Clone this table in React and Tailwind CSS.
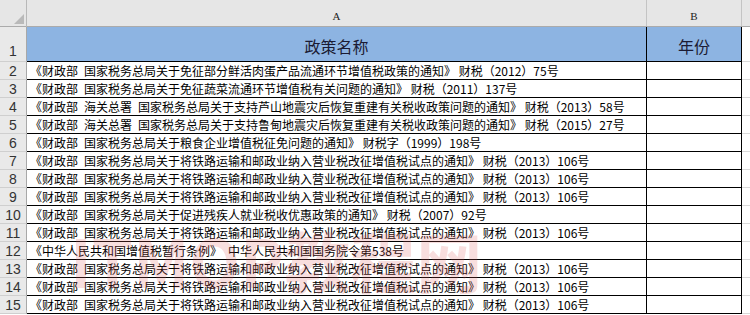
import React from "react";

const S = "\u2002";

const T106 = `《财政部${S}国家税务总局关于将铁路运输和邮政业纳入营业税改征增值税试点的通知》 财税（2013）106号`;

const policies = [
  `《财政部${S}国家税务总局关于免征部分鲜活肉蛋产品流通环节增值税政策的通知》 财税（2012）75号`,
  `《财政部${S}国家税务总局关于免征蔬菜流通环节增值税有关问题的通知》 财税（2011）137号`,
  `《财政部${S}海关总署${S}国家税务总局关于支持芦山地震灾后恢复重建有关税收政策问题的通知》 财税（2013）58号`,
  `《财政部${S}海关总署${S}国家税务总局关于支持鲁甸地震灾后恢复重建有关税收政策问题的通知》 财税（2015）27号`,
  `《财政部${S}国家税务总局关于粮食企业增值税征免问题的通知》 财税字（1999）198号`,
  T106,
  T106,
  T106,
  `《财政部${S}国家税务总局关于促进残疾人就业税收优惠政策的通知》 财税（2007）92号`,
  T106,
  `《中华人民共和国增值税暂行条例》${S}中华人民共和国国务院令第538号`,
  T106,
  T106,
  T106,
];

const Corner = () => (
  <svg width="27" height="27" viewBox="0 0 27 27">
    <polygon points="24,14 24,24 14,24" fill="#b9b9b9" />
  </svg>
);

const RowNum = ({ n, tall }) => (
  <div
    className={`w-[27px] shrink-0 flex justify-center bg-[#e9e9e9] border-r border-b border-r-[#a8a8a8] border-b-[#cfcfcf] font-['Liberation_Sans',sans-serif] text-[14px] text-[#333] leading-none ${
      tall ? "items-end pb-[3px]" : "items-center"
    }`}
  >
    {n}
  </div>
);

export default function App() {
  return (
    <div className="relative w-[750px] h-[315px] overflow-hidden bg-white font-['Noto_Sans_CJK_SC',sans-serif]">
      {/* column letters */}
      <div className="flex h-[27px] bg-[#e6e6e6] border-b border-[#ababab] font-['Liberation_Serif',serif] text-[11px] text-[#222]">
        <div className="w-[27px] shrink-0 border-r border-[#b8b8b8] -mb-px">
          <Corner />
        </div>
        <div className="w-[620px] shrink-0 flex items-end justify-center pb-[2px] border-r border-[#c4c4c4]">
          A
        </div>
        <div className="w-[95px] shrink-0 flex items-end justify-center pb-[2px] border-r border-[#c4c4c4]">
          B
        </div>
        <div className="flex-1" />
      </div>

      {/* title row */}
      <div className="flex h-[35px]">
        <RowNum n={1} tall />
        <div className="w-[620px] shrink-0 flex items-center justify-center pt-[4px] bg-[#8db4e2] border-r border-b border-black text-[16px] text-[#1b1b33] leading-none">
          政策名称
        </div>
        <div className="w-[95px] shrink-0 flex items-center justify-center pt-[4px] bg-[#8db4e2] border-r border-b border-black text-[16px] text-[#1b1b33] leading-none">
          年份
        </div>
        <div className="flex-1 border-b border-[#d9d9d9]" />
      </div>

      {policies.map((text, i) => (
        <div className="flex h-[18px]" key={i}>
          <RowNum n={i + 2} />
          <div className="w-[620px] shrink-0 flex items-center pl-[3px] border-r border-b border-black text-[12px] text-black leading-none whitespace-pre overflow-hidden">
            {text}
          </div>
          <div className="w-[95px] shrink-0 border-r border-b border-black" />
          <div className="flex-1 border-b border-[#d9d9d9]" />
        </div>
      ))}

      {/* watermark */}
      <div className="absolute left-[70px] top-[226px] pointer-events-none text-[66px] leading-none font-bold text-[rgba(220,90,90,0.2)] whitespace-pre">
        ITMOP教程网
      </div>
    </div>
  );
}
